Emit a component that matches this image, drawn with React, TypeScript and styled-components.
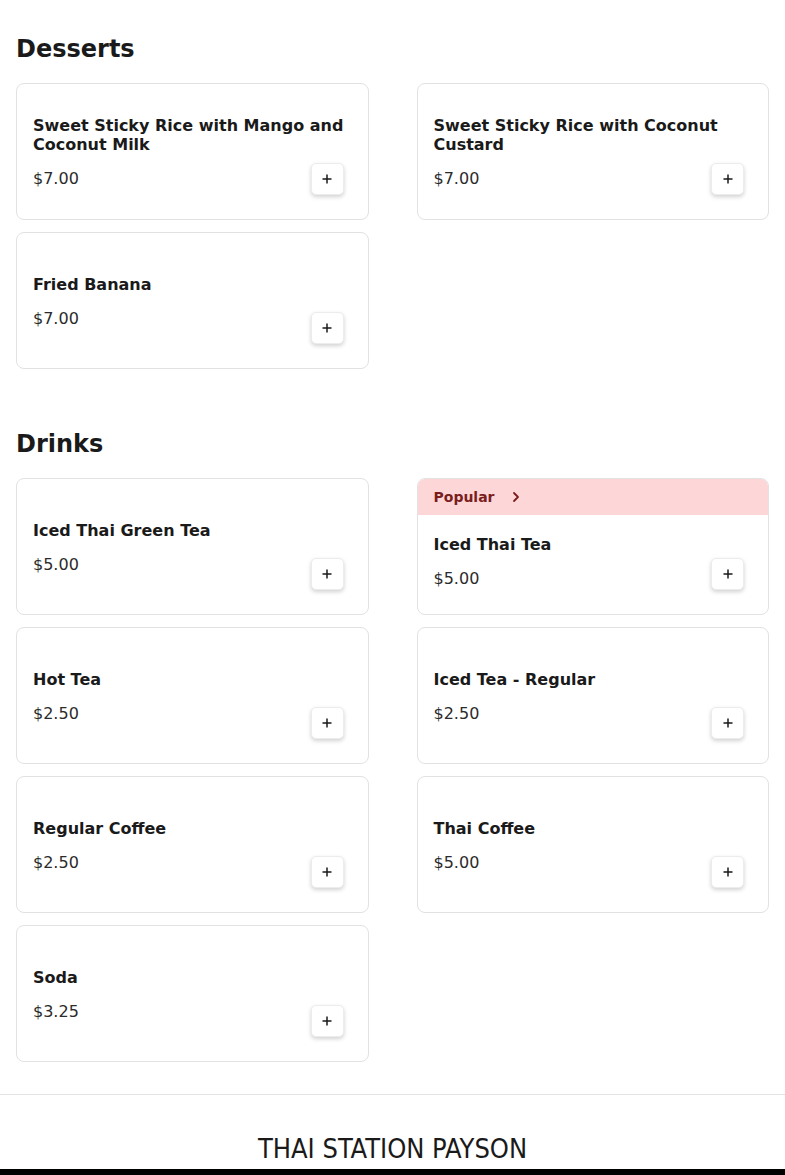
import React from "react";
import styled, { createGlobalStyle } from "styled-components";

const Global = createGlobalStyle`
  html, body { margin: 0; padding: 0; background: #fff; }
  body { font-family: "DejaVu Sans", "Noto Sans", sans-serif; color: #1a1a1a; }
  * { box-sizing: border-box; }
`;

const Page = styled.div`
  padding-top: 7px;
`;

const Section = styled.section`
  padding: 28px 16px 33px;
  &:last-of-type {
    padding-bottom: 32px;
  }
`;

const Heading = styled.h2`
  margin: 0 0 19px;
  font-size: 24px;
  line-height: 29px;
  font-weight: 700;
  color: #1a1a1a;
`;

const Grid = styled.div`
  display: grid;
  grid-template-columns: 1fr 1fr;
  column-gap: 48px;
  row-gap: 12px;
`;

const Card = styled.div`
  display: flex;
  flex-direction: column;
  min-height: 137px;
  border: 1px solid #e2e2e2;
  border-radius: 8px;
  background: #fff;
  overflow: hidden;
`;

const Badge = styled.div`
  display: flex;
  align-items: center;
  gap: 16px;
  height: 36px;
  padding: 0 16px;
  background: #fdd7d7;
  color: #7a1d1d;
  font-size: 14px;
  font-weight: 700;
`;

const Body = styled.div`
  flex: 1;
  display: grid;
  grid-template-columns: 1fr;
  grid-template-rows: 1fr;
  padding: 0 24px 0 16px;
`;

const Info = styled.div<{ $popular?: boolean }>`
  grid-area: 1 / 1;
  align-self: center;
  display: flex;
  flex-direction: column;
  padding: ${(p) => (p.$popular ? "0 0 3px" : "4px 0 0")};
`;

const Title = styled.div`
  font-size: 16px;
  line-height: 19px;
  font-weight: 700;
  color: #1a1a1a;
`;

const Price = styled.div`
  margin-top: 13px;
  font-size: 16px;
  line-height: 24px;
  color: #2b2b2b;
`;

const AddButton = styled.button`
  grid-area: 1 / 1;
  justify-self: end;
  align-self: end;
  margin-bottom: 24px;
  width: 33px;
  height: 32px;
  display: flex;
  align-items: center;
  justify-content: center;
  padding: 0;
  border: 1px solid #ececec;
  border-radius: 5px;
  background: #fff;
  box-shadow: 0 2px 4px rgba(0, 0, 0, 0.18);
  color: #1a1a1a;
  cursor: pointer;
`;

const Footer = styled.footer`
  border-top: 1px solid #e3e3e3;
  padding-top: 38px;
`;

const Brand = styled.div`
  text-align: center;
  font-family: "DejaVu Sans Condensed", "DejaVu Sans", sans-serif;
  font-stretch: condensed;
  font-size: 27px;
  line-height: 32px;
  color: #1a1a1a;
  margin-bottom: 4px;
`;

const DarkBand = styled.div`
  height: 200px;
  background: #000;
`;

type Item = { name: string; price: string; popular?: boolean };

const desserts: Item[] = [
  { name: "Sweet Sticky Rice with Mango and Coconut Milk", price: "$7.00" },
  { name: "Sweet Sticky Rice with Coconut Custard", price: "$7.00" },
  { name: "Fried Banana", price: "$7.00" },
];

const drinks: Item[] = [
  { name: "Iced Thai Green Tea", price: "$5.00" },
  { name: "Iced Thai Tea", price: "$5.00", popular: true },
  { name: "Hot Tea", price: "$2.50" },
  { name: "Iced Tea - Regular", price: "$2.50" },
  { name: "Regular Coffee", price: "$2.50" },
  { name: "Thai Coffee", price: "$5.00" },
  { name: "Soda", price: "$3.25" },
];

const Plus = () => (
  <svg width="12" height="12" viewBox="0 0 12 12" aria-hidden="true">
    <path d="M6 1.5v9M1.5 6h9" stroke="currentColor" strokeWidth="1.5" />
  </svg>
);

const Chevron = () => (
  <svg width="10" height="12" viewBox="0 0 10 12" aria-hidden="true">
    <path d="M3 2l4 4-4 4" fill="none" stroke="currentColor" strokeWidth="1.8" strokeLinecap="round" strokeLinejoin="round" />
  </svg>
);

const MenuCard = ({ item }: { item: Item }) => (
  <Card>
    {item.popular && (
      <Badge>
        Popular
        <Chevron />
      </Badge>
    )}
    <Body>
      <Info $popular={item.popular}>
        <Title>{item.name}</Title>
        <Price>{item.price}</Price>
      </Info>
      <AddButton aria-label={`Add ${item.name}`}>
        <Plus />
      </AddButton>
    </Body>
  </Card>
);

const MenuSection = ({ title, items }: { title: string; items: Item[] }) => (
  <Section>
    <Heading>{title}</Heading>
    <Grid>
      {items.map((it) => (
        <MenuCard key={it.name} item={it} />
      ))}
    </Grid>
  </Section>
);

export default function App() {
  return (
    <Page>
      <Global />
      <MenuSection title="Desserts" items={desserts} />
      <MenuSection title="Drinks" items={drinks} />
      <Footer>
        <Brand>THAI STATION PAYSON</Brand>
        <DarkBand />
      </Footer>
    </Page>
  );
}
